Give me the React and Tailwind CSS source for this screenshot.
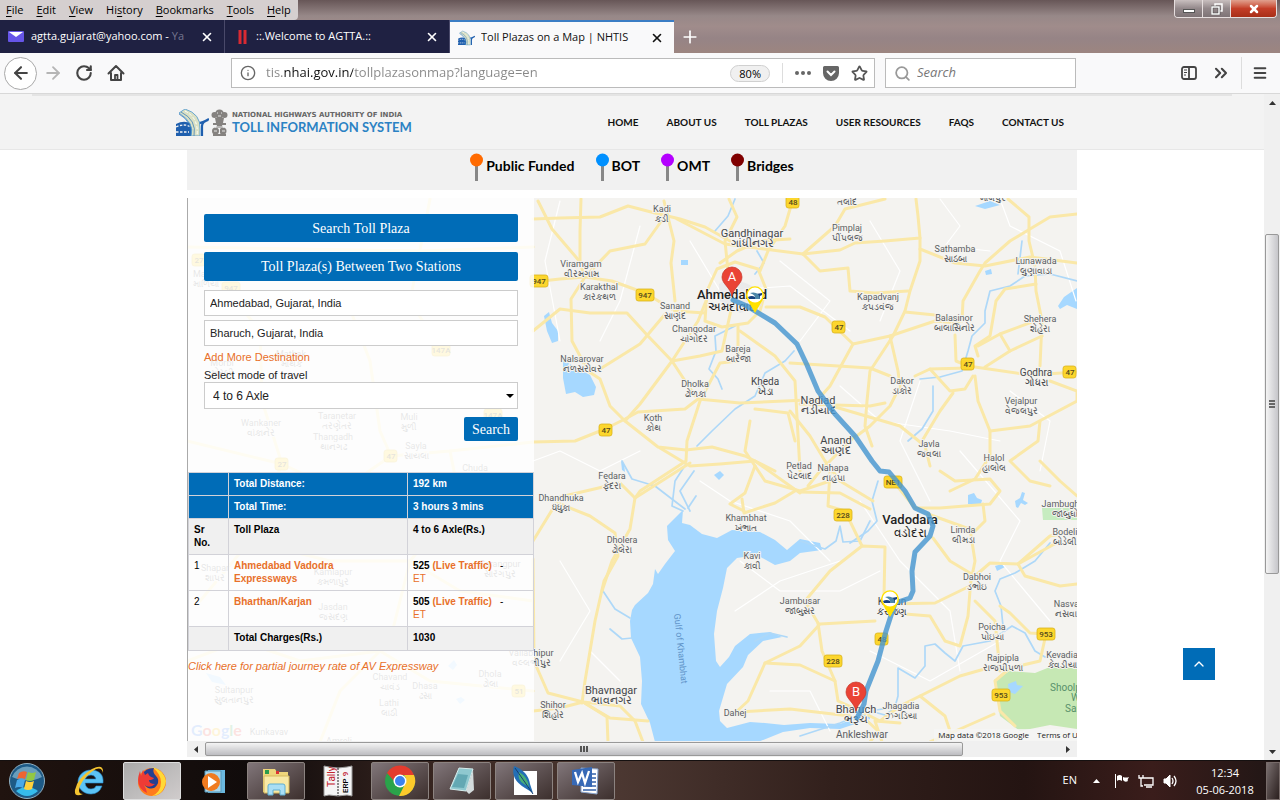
import React from 'react';
import { ArrowLeft, ArrowRight, RotateCw, Info, Star, Search, ChevronsRight, Menu, Plus, X, ChevronUp } from 'lucide-react';

const menus = ['File', 'Edit', 'View', 'History', 'Bookmarks', 'Tools', 'Help'];
const accessKeys = { File: 0, Edit: 0, View: 0, History: 2, Bookmarks: 0, Tools: 0, Help: 0 };

const navLinks = ['HOME', 'ABOUT US', 'TOLL PLAZAS', 'USER RESOURCES', 'FAQS', 'CONTACT US'];

const legend = [
  { label: 'Public Funded', color: '#ff6a00' },
  { label: 'BOT', color: '#0090ff' },
  { label: 'OMT', color: '#b400ff' },
  { label: 'Bridges', color: '#800000' },
];

// [name, local name, x, baseline, size]
const places = [
  ['Kadi', 'કડી', 662, 211, 9],
  ['Gandhinagar', 'ગાંધીનગર', 752, 236, 11],
  ['Viramgam', 'વીરમગામ', 581, 266, 9],
  ['Karakthal', 'કારકથળ', 599, 289, 9],
  ['Sanand', 'સાણંદ', 675, 308, 9],
  ['Changodar', 'ચાંગોદર', 694, 331, 9],
  ['Bareja', 'બારેજા', 738, 351, 9],
  ['Nalsarovar', 'નળસરોવર', 582, 361, 9],
  ['Dholka', 'ઢોળકા', 695, 386, 9],
  ['Kheda', 'ખેડા', 765, 384, 10],
  ['Koth', 'કોથ', 653, 420, 9],
  ['Nadiad', 'નડીયાદ', 818, 403, 11],
  ['Anand', 'આણંદ', 836, 443, 11],
  ['Petlad', 'પેટલાદ', 799, 468, 9],
  ['Nahapa', 'નાહપા', 833, 470, 9],
  ['Pimplaj', 'પીંપલજ', 847, 230, 9],
  ['Sathamba', 'સાઠંબા', 955, 251, 9],
  ['Lunawada', 'લુણાવાડા', 1036, 263, 9],
  ['Kapadvanj', 'કપડવંજ', 878, 299, 9],
  ['Balasinor', 'બાલાસિનોર', 954, 320, 9],
  ['Shehera', 'શેહેરા', 1040, 321, 9],
  ['Godhra', 'ગોધરા', 1036, 375, 10],
  ['Dakor', 'ડાકોર', 902, 383, 9],
  ['Vejalpur', 'વેજલપુર', 1021, 403, 9],
  ['Javla', 'જવલા', 929, 446, 9],
  ['Halol', 'હાલોલ', 994, 460, 9],
  ['Fedara', 'ફેદરા', 612, 478, 9],
  ['Dhandhuka', 'ધંધુકા', 561, 500, 9],
  ['Dholera', 'ઢોલેરા', 622, 542, 9],
  ['Khambhat', 'ખંભાત', 746, 520, 9],
  ['Kavi', 'કાવી', 752, 558, 9],
  ['Jambusar', 'જાંબુસર', 800, 603, 9],
  ['Bhavnagar', 'ભાવનગર', 611, 693, 11],
  ['Shihor', 'શિહોર', 553, 707, 9],
  ['Limda', 'લીમડા', 963, 532, 9],
  ['Dabhoi', 'ડભોઇ', 977, 579, 9],
  ['Poicha', 'પોઇચા', 992, 629, 9],
  ['Rajpipla', 'રાજપીપળા', 1003, 660, 9],
  ['Jhagadia', 'ઝગડિયા', 901, 708, 9],
  ['Bharuch', 'ભરૂચ', 856, 712, 11],
  ['Karjan', 'કરજણ', 892, 604, 10],
  ['Jambughoda', 'જાંબુઘોડા', 1068, 506, 9],
  ['Bodeli', 'બોડેલી', 1065, 534, 9],
  ['Nasvadi', 'નસવાડી', 1070, 606, 9],
  ['Kevadia', 'કેવડીયા', 1062, 657, 9],
  ['Vallabhipur', 'વલ્લભીપુર', 531, 655, 9],
  ['Wankaner', 'વાંકાનેર', 261, 425, 9],
  ['Taranetar', 'તરણેતર', 337, 418, 9],
  ['Muli', 'મુળી', 409, 419, 9],
  ['Thangadh', 'થાનગઢ', 333, 439, 9],
  ['Sayla', 'સાયલા', 416, 448, 9],
  ['Chuda', 'ચુડા', 475, 470, 9],
  ['Mathak', 'માથક', 291, 356, 9],
  ['Morbi', 'મોરબી', 222, 365, 9],
  ['Maliya', 'માળિયા', 206, 276, 9],
  ['Shapar', 'શાપર', 215, 570, 9],
  ['Kamlapur', 'કમળાપુર', 333, 574, 9],
  ['Jasdan', 'જસદણ', 333, 609, 9],
  ['Sarangpur', 'સારંગપુર', 500, 566, 9],
  ['Sultanpur', 'સુલતાનપુર', 234, 692, 9],
  ['Chavand', 'ચાવંડ', 390, 679, 9],
  ['Dhasa', 'ઢસા', 425, 688, 9],
  ['Lathi', 'લાઠી', 389, 705, 9],
  ['Dhola', 'ઢોલા', 490, 676, 9],
];

const shields = [
  ['48', 793, 201], ['947', 539, 280], ['947', 645, 294], ['47', 839, 326], ['47', 968, 363],
  ['47', 1070, 371], ['47', 606, 429], ['NE1', 893, 481], ['228', 843, 514], ['228', 833, 660],
  ['48', 882, 638], ['953', 1046, 633], ['953', 1001, 694],
  ['27', 199, 259], ['947', 231, 287], ['147A', 441, 349], ['147A', 493, 414], ['47', 391, 455],
  ['27', 282, 463], ['51', 519, 690],
];

const majorRoads = [
  'M533 218 L560 217 600 216 628 205 655 212 680 218 705 226 730 240',
  'M581 198 L580 230 580 262 585 276 571 298 572 340 588 370 600 378 610 405 625 420 658 446 686 449 712 446 745 455 775 470',
  'M538 200 L552 228 581 262',
  'M533 281 L560 278 585 276 612 280 645 292 675 310 705 312',
  'M585 276 L610 250 645 243 665 215',
  'M533 330 L560 308 590 312 627 312 648 335 672 360 695 395',
  'M533 441 L575 440 605 428 625 418 638 411 685 408 698 398 740 402 830 398',
  'M625 420 L640 403 672 360 698 320 706 300',
  'M600 368 L640 343 666 312',
  'M664 200 L674 240 671 262 675 300',
  'M705 320 L707 290 717 268 735 261 758 268 766 288 760 310 748 322 722 326 705 320',
  'M729 198 L737 216 725 240 728 270 733 298',
  'M793 198 L785 225 768 250 760 270',
  'M720 262 L737 250 760 240 790 238',
  'M677 218 L725 243 803 253 835 225 845 208 885 198',
  'M803 253 L840 249 855 242 885 240 920 237 918 215 916 198',
  'M803 253 L820 270 848 267 850 290 875 292 908 290',
  'M766 306 L800 306 825 316 853 343 890 335 935 320 958 322',
  'M853 343 L830 385 815 402',
  'M733 300 L722 350 700 355 672 360',
  'M738 325 L738 360 720 362 700 400 687 440 686 460 640 490 635 497',
  'M740 330 L775 355 795 380 800 470',
  'M790 362 L870 367 890 375',
  'M920 237 L920 260 910 290 905 310 893 335 870 370 867 400 865 425 872 445',
  'M890 335 L898 370 900 385 890 405 870 425 858 434',
  'M905 311 L935 314 960 320',
  'M955 334 L956 360 968 365 1030 374 1077 371',
  'M915 375 L930 368 968 367',
  'M962 320 L963 300 980 270 985 262 1010 240 1030 228 1050 216 1077 213',
  'M920 248 L955 262 985 265 1030 256 1077 262',
  'M1008 198 L1029 216 1029 240 1035 265 1036 290 1042 320 1040 365',
  'M1036 283 L1005 288 996 300 990 335 975 345 978 355',
  'M978 345 L1000 333 1040 318',
  'M1000 333 L1010 350',
  'M985 366 L1010 350 1042 335',
  'M975 375 L978 400 990 430 990 455 975 478 950 490',
  'M990 430 L1030 425 1077 400 1077 390 1050 380',
  'M1040 420 L1038 440 1010 460 1030 480 1050 485',
  'M930 368 L950 390 965 388 973 375',
  'M922 440 L940 410 953 392',
  'M825 403 L900 425 925 445 930 465',
  'M855 435 L820 470 808 485',
  'M790 410 L810 435 825 460 840 480 873 500',
  'M755 408 L788 412 795 440',
  'M750 420 L745 450 765 480 800 490 830 480',
  'M800 403 L870 405 885 402',
  'M660 447 L690 465 720 463 755 460 800 492',
  'M755 465 L745 492 730 503 744 510',
  'M742 498 L744 512 775 502 795 490',
  'M533 540 L560 496 620 482 635 497 690 462',
  'M560 503 L590 515 615 532 618 555 604 580 595 620 585 680 582 702',
  'M635 497 L630 528 612 560 602 590',
  'M533 558 L534 660 548 692 583 701 610 717 648 720',
  'M533 710 L560 707 583 701 607 716 608 741',
  'M583 701 L620 705 635 720 643 741',
  'M875 620 L820 623 800 645 765 662 748 700 735 712',
  'M765 662 L800 664 835 680 838 700 856 708',
  'M738 711 L790 708 850 715',
  'M818 622 L822 650 835 680',
  'M818 622 L805 600 830 570 862 545 885 546 884 595',
  'M862 545 L845 510 828 505 830 470',
  'M800 491 L840 492 870 508',
  'M893 480 L915 507 940 507 990 503 1000 490 990 478 955 480 940 470',
  'M928 513 L975 530 985 520 983 503',
  'M933 537 L950 560 975 575 990 562 1018 563 1050 535 1077 530',
  'M1018 563 L1025 575 1060 585 1077 583',
  'M1018 563 L1060 540',
  'M970 528 L975 560 970 585 935 602 890 603',
  'M905 613 L930 615 945 640 960 645 968 615 970 590',
  'M1000 605 L1010 612 1030 632 1046 633 1040 660 1010 667 995 680 1000 710 1015 725',
  'M995 665 L960 675 920 695 945 715 950 730',
  'M994 713 L960 728 930 741',
  'M1000 670 L995 620 975 600',
  'M856 708 L880 720 900 705 920 695',
  'M862 715 L878 730 870 741',
  'M882 741 L875 720 900 722',
  'M1040 460 L1060 480 1077 495',
  'M187 246 L300 248 420 250 533 246',
  'M187 440 L282 463 340 490 391 455 450 450 533 441',
  'M204 260 L260 330 262 400 282 463 250 540 200 600',
  'M343 290 L370 360 380 430 391 455',
  'M441 349 L410 300 430 198',
  'M187 660 L240 640 300 660 380 650 430 680 533 690',
  'M320 741 L340 690 390 640 410 560 460 500 450 450',
  'M533 600 L460 590 410 560 330 560 250 540 187 545',
];

const minorRoads = [
  'M560 200 L545 260 560 340', 'M533 460 L560 450 600 470 640 450', 'M640 225 L620 300 600 340',
  'M690 240 L720 290 790 285 850 330', 'M870 220 L900 270 880 320', 'M940 198 L960 225 945 245 990 250',
  'M840 385 L880 420 950 430 1000 440', 'M1000 198 L1010 225 1060 250 1076 300',
  'M700 480 L730 500 790 520 830 560', 'M740 560 L780 590 840 590 880 570', 'M735 610 L780 580 840 560',
  'M590 650 L620 680', 'M860 500 L900 560 950 610 960 670', 'M960 450 L1020 520 1000 560 1050 620',
  'M870 650 L930 680 1000 640', 'M770 690 L810 690 830 730', 'M560 560 L590 610 560 660',
  'M780 260 L830 300 800 340', 'M920 380 L900 440 930 500', 'M1010 390 L1050 420 1040 470',
];

const rivers = [
  'M715 230 L728 215 735 198', 'M757 250 L764 262 755 273', 'M735 325 L715 335 716 350 709 368 718 378 722 388',
  'M794 350 L785 360 765 372 755 395 735 408 712 430 697 445', 'M686 463 L675 480 672 505 683 510',
  'M622 460 L632 478 655 485 668 495 685 508', 'M690 510 L680 490 694 470', 'M696 495 L688 507',
  'M1077 280 L1050 273 1025 275 1010 285 990 290 985 310 985 322 972 335 968 350 962 370 940 376 920 378',
  'M933 385 L933 410 922 428 908 440', 'M1018 273 L1022 240', 'M878 480 L872 500 877 520 868 530 850 542',
  'M800 540 L825 548 836 540 840 525 843 541 860 540 870 520', 'M603 590 L615 608 630 617',
  'M610 628 L622 638 632 637', 'M787 636 L770 632 755 640',
  'M800 735 L840 722 870 710 895 706 898 695 898 667 915 677 925 665 925 645 935 643 945 652 955 660 963 645 990 640 1012 625 1025 632 1035 650 1045 656',
  'M1050 542 L1035 560 1015 572 1000 578 995 590 1001 605 1003 625', 'M897 706 L885 714 870 710',
];

const Places = () => (
  <g textAnchor="middle" fontFamily="Roboto, 'Noto Sans', sans-serif" fill="#5c5f63" stroke="#f4f3f0" strokeWidth="2" paintOrder="stroke">
    {places.map(([name, local, x, y, size]) => (
      <g key={name} fontSize={size} fill={size > 9 ? '#44474b' : '#5c5f63'}>
        <text x={x} y={y}>{name}</text>
        <text x={x} y={y + 10}>{local}</text>
      </g>
    ))}
    <text x="847" y="204" fontSize="9">તલોદ</text>
    <text x="993" y="200" fontSize="9">માલપુર</text>
    <text x="735" y="715" fontSize="9">Dahej</text>
    <text x="862" y="737" fontSize="10">Ankleshwar</text>
    <text x="269" y="734" fontSize="9">Kunkavav</text>
    <text x="339" y="743" fontSize="9">Amreli</text>
    <g fill="#222" fontWeight="500">
      <text x="732" y="298" fontSize="13">Ahmedabad</text>
      <text x="732" y="310" fontSize="12">અમદાવાદ</text>
      <text x="910" y="523" fontSize="13">Vadodara</text>
      <text x="910" y="536" fontSize="12">વડોદરા</text>
    </g>
  </g>
);

const Shield = ({ label, x, y }) => (
  <g>
    <rect x={x - (label.length > 2 ? 9 : 7)} y={y - 6} width={label.length > 2 ? 18 : 13} height="12" rx="2.5" fill="#fcd62d" stroke="#d9b31c" strokeWidth="0.8" />
    <text x={x} y={y + 3} fontSize="8" fontWeight="500" textAnchor="middle" fill="#54491c" fontFamily="Roboto, sans-serif">{label}</text>
  </g>
);

const RoadMark = () => (
  <>
    <path d="M0 15 Q9 10 18 16 L17 27 L0 27Z" fill="#1f5fae" />
    <path d="M0 18 Q8 14 15 18M0 23h13" fill="none" stroke="#f3f3f3" strokeWidth="1.3" strokeDasharray="2.500 1.500" />
    <path d="M20 14 Q25 15 33 10 M32 11 Q26 13 26 17 L26 27" fill="none" stroke="#1f5fae" strokeWidth="2.200" />
    <path d="M3 4 L9 0 Q25 5 24 20 L24 27 L15 27 Q19 14 3 4Z" fill="#dbe1c4" stroke="#5b9fd0" strokeWidth="0.900" />
    <path d="M3 5 Q17 13 14 27 M5 3 Q21 11 18 27" fill="none" stroke="#2d72b8" strokeWidth="0.700" />
    <path d="M9 2 Q23 9 21 27" fill="none" stroke="#fff" strokeWidth="1" strokeDasharray="3 2" />
  </>
);

const LetterPin = ({ letter, x, y }) => (
  <g transform={`translate(${x} ${y})`}>
    <path d="M0 0 C-2 -9 -10 -12 -10 -19 A10 10 0 0 1 10 -19 C10 -12 2 -9 0 0Z" fill="#ea4335" stroke="#c63327" strokeWidth="0.7" />
    <text y="-15" fontSize="13" textAnchor="middle" fill="#fff" fontFamily="Roboto, sans-serif">{letter}</text>
  </g>
);

const PlazaPin = ({ x, y }) => (
  <g transform={`translate(${x} ${y})`}>
    <path d="M0 0 L-7 -12 A9 9 0 1 1 7 -12Z" fill="#ffe100" />
    <circle cy="-18" r="7.5" fill="#fff" />
    <path d="M-7 -16 Q-3 -18 0 -16 L0 -14 L-6 -14Z M1 -19 L7 -20 L7 -18 L5 -17 L5 -14 L3 -14Z" fill="#16407f" />
    <path d="M-5 -20 Q4 -22 5 -14 L0 -14 Q1 -18 -5 -20Z" fill="#4c86a8" />
  </g>
);

const TollMap = () => (
  <svg className="absolute inset-0 h-full w-full" viewBox="187 197 890 544" preserveAspectRatio="xMinYMin slice" role="img" aria-label="Toll plazas map">
    <rect x="187" y="197" width="1600" height="1200" fill="#f4f3f0" />
    <path d="M994 679 L1010 670 1035 672 1055 664 1077 668 V728 L1050 724 1020 730 1000 715Z" fill="#c6e8b4" />
    <path d="M1042 507h35v12h-34z" fill="#c6ecc0" />
    <g fill="#a6d8ff">
      <path d="M683 509 L667 525 668 539 675 550 665 563 658 573 655 568 653 583 648 592 635 604 632 609 630 620 631 637 640 656 642 680 641 703 650 722 655 741 L758 741 783 731 810 727 840 728 870 718 870 712 840 723 810 722 784 724 765 722 750 721 727 727 720 720 719 710 727 683 743 666 748 654 763 640 782 636 770 631 750 633 735 645 729 656 720 666 716 660 714 633 717 610 723 587 727 567 737 557 757 554 775 564 790 560 800 552 822 549 820 542 800 538 787 549 775 539 760 531 732 529 717 537 702 533 690 524 682 522Z" />
      <path d="M563 359 L575 366 590 374 596 386 594 394 583 396 575 391 566 393 563 377Z" />
      <path d="M544 315 L549 311 552 322 558 330 558 340 552 342 547 330Z" />
      <path d="M681 259h7v5h-7z" />
      <path d="M975 205 L990 200 1000 204 985 208Z" />
      <path d="M1058 305 L1064 296 1077 287 V308 L1067 304 1060 308Z" />
      <path d="M985 270l6-2 1 5-6 1z" />
      <path d="M968 494l6-2 3 5 5 2-1 4h-13z" />
      <path d="M1015 500l5-3 2-6 3 1-2 7 5 3-3 2-4-2-3 5-2-1z" />
      <path d="M995 565l7-2 3 3-8 4z" />
      <path d="M1008 683l8-3 1 4 6 1-8 8-6-2z" />
      <path d="M714 474l6-4 4 4-5 5z" />
      <path d="M206 672l14 4 6 8-14-3z" />
      <path d="M448 665l6-6 3 5-4 5z" />
      <path d="M456 698l5-2 4 3-5 4z" />
      <path d="M621 460l3 3 1 8-3-2z" />
    </g>
    <g fill="none" strokeLinejoin="round" strokeLinecap="round">
      {minorRoads.map((d) => <path key={d} d={d} stroke="#fff" strokeWidth="1.2" />)}
      {rivers.map((d) => <path key={d} d={d} stroke="#aed8f8" strokeWidth="1.7" />)}
      {majorRoads.map((d) => <path key={d} d={d} stroke="#fae8a8" strokeWidth="3" />)}
    </g>
    <path d="M719 283 Q735 273 760 290 L762 305 740 312 720 300Z" fill="#e6e6e8" opacity="0.7" />
    {shields.map(([label, x, y]) => <Shield key={`${x}-${y}`} label={label} x={x} y={y} />)}
    <Places />
    <g fill="#57906a" fontSize="10" fontFamily="Roboto, sans-serif">
      <text x="1050" y="690">Shoolpaneshwar</text>
      <text x="1071" y="700">Wildlife</text>
      <text x="1065" y="711">Sanctuary</text>
    </g>
    <text transform="translate(674 613) rotate(84)" fontSize="9" fill="#5f93c8" fontFamily="Roboto, sans-serif">Gulf of Khambhat</text>
    <path
      d="M733 299 L747 305 775 322 797 343 807 364 818 390 835 413 855 435 872 460 880 470 889 471 905 490 915 507 928 513 933 525 930 535 915 551 912 570 913 590 910 597 895 602 886 630 878 660 866 690 864 703 857 717"
      fill="none" stroke="#4796cf" strokeOpacity="0.82" strokeWidth="5" strokeLinejoin="round" strokeLinecap="round"
    />
    <LetterPin letter="A" x={732} y={295} />
    <LetterPin letter="B" x={856} y={710} />
    <PlazaPin x={755} y={312} />
    <PlazaPin x={890} y={616} />
    <text x="191" y="735" fontSize="16" fontFamily="Lato, sans-serif" fontWeight="700" fill="#4285f4">
      G<tspan fill="#ea4335">o</tspan><tspan fill="#fbbc05">o</tspan>g<tspan fill="#34a853">l</tspan><tspan fill="#ea4335">e</tspan>
    </text>
  </svg>
);

const WindowButtons = () => (
  <div className="mr-[3px] flex h-[18px] w-[103px] overflow-hidden rounded-b border border-t-0 border-[#e6dede] text-white">
    <button type="button" aria-label="Minimize" className="flex w-7 items-center justify-center border-r border-[#e6dede] bg-linear-to-b from-[#c9bfbf] via-[#93888a] to-[#7e7376]">
      <span className="mt-1 h-1 w-3 border border-[#555] bg-white" />
    </button>
    <button type="button" aria-label="Restore" className="flex w-7 items-center justify-center border-r border-[#e6dede] bg-linear-to-b from-[#c9bfbf] via-[#93888a] to-[#7e7376]">
      <svg viewBox="0 0 12 12" className="h-3 w-3" fill="none" stroke="#fff" strokeWidth="1.5"><path d="M4 3V1h7v7H9" /><path d="M1 4h7v7H1z" stroke="#444" strokeWidth="2.6" /><path d="M1 4h7v7H1z" /></svg>
    </button>
    <button type="button" aria-label="Close window" className="flex flex-1 items-center justify-center bg-linear-to-b from-[#e0a08e] via-[#c43e28] to-[#a82f18]">
      <X className="h-3 w-3" strokeWidth={5} />
    </button>
  </div>
);

const TitleBar = () => (
  <div className="flex h-5 items-start justify-between">
    <div className="flex h-5 w-[298px] items-center gap-[13px] rounded-br bg-[#d5cfcf] pl-1.5 text-[11px] text-black">
      {menus.map((name) => {
        const at = accessKeys[name];
        return (
          <button type="button" key={name} className="leading-5">
            {name.slice(0, at)}<u className="underline-offset-2">{name[at]}</u>{name.slice(at + 1)}
          </button>
        );
      })}
    </div>
    <WindowButtons />
  </div>
);

const Tab = ({ icon, title, active, faded }) => (
  <div className={active
    ? 'flex w-[224px] items-center border-t-2 border-[#3b7dc4] bg-[#f9f9fa] pr-2.5 pl-2 text-[#111]'
    : 'flex w-[225px] items-center border-r border-[#4a4a6a] bg-[#1f2142] pr-2.5 pl-2 text-white'}>
    <span className="flex h-5 w-[23px] shrink-0 items-center">{icon}</span>
    <span className="flex-1 overflow-hidden text-[11px] whitespace-nowrap">
      {title}{faded && <span className="text-[#75768f]">{faded}</span>}
    </span>
    <button type="button" aria-label={`Close ${title}`} className="ml-1.5"><X className="h-3.5 w-3.5" strokeWidth={2.8} /></button>
  </div>
);

const Tabs = () => (
  <div className="flex h-[33px]">
    <Tab title="agtta.gujarat@yahoo.com - " faded="Ya" icon={(
      <svg viewBox="0 0 16 12" className="h-3 w-4"><rect width="16" height="11" rx="1" fill="#6655e8" /><path d="M1 1h14L8 6z" fill="#fff" /></svg>
    )} />
    <Tab title="::.Welcome to AGTTA.::" icon={(
      <svg viewBox="0 0 16 16" className="ml-0.5 h-4 w-4"><path d="M5 1v14M10 1v14" stroke="#d92a32" strokeWidth="3" /></svg>
    )} />
    <Tab active title="Toll Plazas on a Map | NHTIS" icon={<svg viewBox="0 0 33 27" className="h-4 w-[17px]"><RoadMark /></svg>} />
    <button type="button" aria-label="New tab" className="ml-1.5 text-white"><Plus className="h-5 w-5" strokeWidth={2} /></button>
  </div>
);

const Toolbar = () => (
  <div className="flex h-[41px] items-center border-b border-[#d8d8d8] bg-[#f9f9fa] pr-3 pl-1 text-[#444]">
    <button type="button" aria-label="Back" className="flex h-[33px] w-[33px] items-center justify-center rounded-full border border-[#a9a9a9] bg-white">
      <ArrowLeft className="h-5 w-5" strokeWidth={2.5} />
    </button>
    <button type="button" aria-label="Forward" className="ml-1.5 text-[#b5b5b5]"><ArrowRight className="h-5 w-5" strokeWidth={2.2} /></button>
    <button type="button" aria-label="Reload" className="ml-3"><RotateCw className="h-[18px] w-[18px]" strokeWidth={2.8} /></button>
    <button type="button" aria-label="Home" className="ml-3.5">
      <svg viewBox="0 0 18 18" className="h-[18px] w-[18px]" fill="none" stroke="currentColor" strokeWidth="2" strokeLinejoin="round" strokeLinecap="round">
        <path d="M1.5 9.5 9 2l7.500 7.500M4 9v7h10V9" /><path d="M8 16v-5h2.500v5" strokeWidth="1.800" />
      </svg>
    </button>
    <div className="ml-[106px] flex h-[30px] w-[644px] items-center border border-[#bbb] bg-white pr-1.5 pl-2">
      <Info className="h-4 w-4 text-[#666]" />
      <input
        aria-label="Address"
        defaultValue="tis.nhai.gov.in/tollplazasonmap?language=en"
        className="ml-2.5 min-w-0 flex-1 bg-[linear-gradient(90deg,#888_18px,#111_18px,#111_87px,#888_87px)] bg-clip-text text-[13px] text-transparent outline-none"
      />
      <span className="rounded-full border border-[#d0d0d0] bg-[#f0f0f0] px-2 text-[11px] leading-[15px] text-black">80%</span>
      <span className="ml-3 h-5 w-px bg-[#ddd]" />
      <button type="button" aria-label="Page actions" className="ml-3">
        <svg viewBox="0 0 16 4" className="h-1 w-4" fill="#666"><circle cx="2" cy="2" r="2" /><circle cx="8" cy="2" r="2" /><circle cx="14" cy="2" r="2" /></svg>
      </button>
      <button type="button" aria-label="Save to Pocket" className="ml-3">
        <svg viewBox="0 0 16 15" className="h-[15px] w-4"><path d="M1.500 0h13A1.500 1.500 0 0 1 16 1.500V7a8 8 0 0 1-16 0V1.500A1.500 1.500 0 0 1 1.500 0z" fill="#666" /><path d="M4.500 5.500 8 9l3.500-3.500" fill="none" stroke="#fff" strokeWidth="2" strokeLinecap="round" /></svg>
      </button>
      <button type="button" aria-label="Bookmark" className="ml-3"><Star className="h-[17px] w-[17px] text-[#555]" strokeWidth={2.5} /></button>
    </div>
    <label className="ml-2.5 flex h-[30px] w-[191px] items-center border border-[#bbb] bg-white pl-2">
      <Search className="h-[17px] w-[17px] text-[#999]" strokeWidth={2.5} />
      <input aria-label="Search the web" placeholder="Search" className="ml-1.5 min-w-0 flex-1 text-[13px] italic outline-none placeholder:text-[#777]" />
    </label>
    <div className="ml-auto flex items-center">
      <button type="button" aria-label="Sidebar">
        <svg viewBox="0 0 16 14" className="h-3.5 w-4" fill="none" stroke="currentColor" strokeWidth="1.800"><rect x="1" y="1" width="14" height="12" rx="2" /><path d="M8 1v12" /><path d="M3 4h3M3 6.500h3M3 9h2" strokeWidth="1" /></svg>
      </button>
      <button type="button" aria-label="More tools" className="ml-3.5"><ChevronsRight className="h-5 w-5" strokeWidth={2.5} /></button>
      <span className="ml-2.5 h-8 w-px bg-[#ddd]" />
      <button type="button" aria-label="Menu" className="ml-2.5"><Menu className="h-4 w-4" strokeWidth={3} /></button>
    </div>
  </div>
);

const Emblem = () => (
  <svg viewBox="0 0 17 27" className="h-[27px] w-[17px]" fill="#85827f">
    <circle cx="8.500" cy="5" r="4.500" /><circle cx="3.500" cy="6" r="3" /><circle cx="13.500" cy="6" r="3" />
    <path d="M4 9h9l-1 5H5zM2 14h13v2H2zM6 16h5l1 3H5z" /><circle cx="4.500" cy="22" r="3.500" /><circle cx="12" cy="22" r="3.500" /><path d="M2 25h13v2H2z" />
    <path d="M6 4h1M10 4h1M7 7h3M4 18h9M3 22h3M11 22h3M8.500 19v6" stroke="#f3f3f3" strokeWidth="0.900" />
  </svg>
);

const SiteHeader = () => (
  <header className="border-b border-[#e7e7e7] bg-[#f3f3f3]">
    <div className="mx-8 h-0.5 bg-[#e4e4e4]" />
    <div className="mx-auto flex h-[53px] max-w-[912px] items-center justify-between pr-6 font-[Lato,sans-serif]">
      <a href="#home" className="flex items-center">
        <svg viewBox="0 0 33 27" className="h-[27px] w-[33px]"><RoadMark /></svg>
        <span className="ml-0.5"><Emblem /></span>
        <span className="ml-1 block">
          <span className="block font-['DejaVu_Sans',sans-serif] text-[7px] leading-[9px] font-bold text-[#666]">NATIONAL HIGHWAYS AUTHORITY OF INDIA</span>
          <span className="block text-[13px] leading-[14px] font-bold text-[#2b82c4]">TOLL INFORMATION SYSTEM</span>
        </span>
      </a>
      <nav className="flex gap-7 text-[10px] font-bold text-[#111]">
        {navLinks.map((link) => <a key={link} href={`#${link.toLowerCase().replace(' ', '-')}`}>{link}</a>)}
      </nav>
    </div>
  </header>
);

const Legend = () => (
  <div className="flex h-10 justify-center gap-[21px] bg-[#f1f1f1] pt-[3px] font-[Lato,sans-serif] text-[14px] leading-[26px] font-bold text-black">
    {legend.map(({ label, color }) => (
      <span key={label} className="flex h-7 items-start gap-[3px]">
        <svg viewBox="0 0 13 28" className="h-7 w-[13px]"><path d="M6.500 8v20" stroke="#878787" strokeWidth="3" /><circle cx="6.500" cy="7" r="6.500" fill={color} /></svg>
        {label}
      </span>
    ))}
  </div>
);

const cell = 'border border-[#d2d2d8] px-[5px] align-top';

const ResultTable = () => (
  <table className="w-full border-collapse text-left text-[10px] leading-[13px] text-black">
    <thead className="bg-[#006cb7] text-white">
      <tr className="h-[23px]"><th className={`${cell} w-10`} /><th className={`${cell} w-[179px] pt-1`}>Total Distance:</th><th className={`${cell} pt-1`}>192 km</th></tr>
      <tr className="h-[23px]"><th className={cell} /><th className={`${cell} pt-1`}>Total Time:</th><th className={`${cell} pt-1`}>3 hours 3 mins</th></tr>
    </thead>
    <tbody>
      <tr className="h-9 bg-[#f0f0f0]"><th className={`${cell} pt-1`}>Sr No.</th><th className={`${cell} pt-1`}>Toll Plaza</th><th className={`${cell} pt-1`}>4 to 6 Axle(Rs.)</th></tr>
      {[['1', 'Ahmedabad Vadodra Expressways', '525'], ['2', 'Bharthan/Karjan', '505']].map(([no, name, fee]) => (
        <tr key={no} className="h-9">
          <td className={`${cell} pt-1`}>{no}</td>
          <td className={`${cell} pt-1 font-bold text-[#e8702a]`}><a href="#plaza" className="block max-w-[120px]">{name}</a></td>
          <td className={`${cell} pt-1`}>
            <b>{fee}</b> <a href="#traffic" className="font-bold text-[#e8702a]">(Live Traffic)</a>
            <span className="ml-2">-</span><br /><a href="#et" className="text-[#e8702a]">ET</a>
          </td>
        </tr>
      ))}
      <tr className="h-6 bg-[#f0f0f0]"><th className={cell} /><th className={`${cell} pt-1`}>Total Charges(Rs.)</th><th className={`${cell} pt-1`}>1030</th></tr>
    </tbody>
  </table>
);

const SearchPanel = () => (
  <div className="relative h-full w-[347px] border-l border-[#aaa] bg-white/85 font-['Liberation_Sans',sans-serif]">
    <div className="px-4 pt-4">
      <button type="button" className="block h-7 w-full rounded-xs bg-[#006cb7] font-['Liberation_Serif',serif] text-[14px] text-white">Search Toll Plaza</button>
      <button type="button" className="mt-2.5 block h-[29px] w-full rounded-xs bg-[#006cb7] font-['Liberation_Serif',serif] text-[14px] text-white">Toll Plaza(s) Between Two Stations</button>
      <input aria-label="From" defaultValue="Ahmedabad, Gujarat, India" className="mt-[9px] block h-[26px] w-full border border-[#ccc] bg-white px-[5px] text-[11px] text-[#222]" />
      <input aria-label="To" defaultValue="Bharuch, Gujarat, India" className="mt-1 block h-[26px] w-full border border-[#ccc] bg-white px-[5px] text-[11px] text-[#222]" />
      <a href="#add" className="mt-1 block text-[11px] leading-[14px] text-[#e8702a]">Add More Destination</a>
      <label htmlFor="mode" className="mt-1 block text-[11px] leading-[14px] text-[#222]">Select mode of travel</label>
      <div className="relative">
        <select id="mode" className="block h-[27px] w-full appearance-none border border-[#ccc] bg-white px-2 text-[12px] text-[#222]">
          <option>4 to 6 Axle</option>
        </select>
        <svg viewBox="0 0 8 4" className="pointer-events-none absolute top-3 right-1 h-1 w-2"><path d="M0 0h8L4 4z" /></svg>
      </div>
      <button type="button" className="mt-2 ml-auto block h-6 w-[54px] rounded-xs bg-[#006cb7] font-['Liberation_Serif',serif] text-[14px] text-white">Search</button>
    </div>
    <div className="mt-[31px]"><ResultTable /></div>
    <a href="#partial" className="mt-2 block text-[11px] leading-[14px] text-[#e8702a] italic">Click here for partial journey rate of AV Expressway</a>
  </div>
);

const HorizontalScrollbar = () => (
  <div className="flex h-4 items-center bg-[#f0f0f0]">
    <span className="w-[18px] text-center"><svg viewBox="0 0 4 7" className="mx-auto h-[7px] w-1"><path d="M4 0v7L0 3.500z" fill="#333" /></svg></span>
    <span className="flex h-3.5 flex-[757] items-center justify-center gap-px rounded-xs border border-[#999] bg-linear-to-b from-[#f4f4f4] to-[#bdbdc1]">
      <i className="h-1.5 w-0.5 bg-[#555]" /><i className="h-1.5 w-0.5 bg-[#555]" /><i className="h-1.5 w-0.5 bg-[#555]" />
    </span>
    <span className="flex-[96]" />
    <span className="w-[18px]"><svg viewBox="0 0 4 7" className="mx-auto h-[7px] w-1"><path d="M0 0v7l4-3.500z" fill="#333" /></svg></span>
  </div>
);

const VerticalScrollbar = () => (
  <div className="flex w-4 flex-col items-center bg-[#f0f0f0]">
    <span className="flex h-[17px] items-center"><svg viewBox="0 0 7 4" className="h-1 w-[7px]"><path d="M0 4h7L3.500 0z" fill="#333" /></svg></span>
    <span className="flex-[123]" />
    <span className="flex w-3.5 flex-[339] flex-col items-center justify-center gap-px rounded-xs border border-[#999] bg-linear-to-r from-[#f4f4f4] to-[#c6c6ca]">
      <i className="h-0.5 w-1.5 bg-[#666]" /><i className="h-0.5 w-1.5 bg-[#666]" /><i className="h-0.5 w-1.5 bg-[#666]" />
    </span>
    <span className="flex-[170]" />
    <span className="flex h-[17px] items-center"><svg viewBox="0 0 7 4" className="h-1 w-[7px]"><path d="M0 0h7L3.500 4z" fill="#333" /></svg></span>
  </div>
);

const icons = {
  'Internet Explorer': (
    <>
      <path d="M29 18H11q1 6 6 6 4 0 5-3h6q-3 8-11 8C9 29 4 23 4 17S9 5 17 5s13 5 12 13zM11 14h11q-1-4-5-4t-6 4z" fill="#5cc3f5" stroke="#278bd0" strokeWidth="0.600" />
      <path d="M29 8Q30 -2 18 4 4 12 1 25q-1 8 8 4Q3 29 6 21 11 10 22 4q6-2 7 4z" fill="#f4c430" />
    </>
  ),
  Firefox: (
    <>
      <circle cx="16" cy="17" r="14" fill="#ff7b1c" />
      <path d="M16 2q12 3 14 14-2 14-14 15 9-4 9-14 0-8-9-15z" fill="#ffd936" />
      <path d="M6 10q3-7 12-7-2 4 2 8t1 9q-3 5-9 3-7-4-6-13z" fill="#253f91" />
      <path d="M4 6q-6 16 7 22-1-5-3-8 6 4 11-1-6 0-6-4 4 0 5-2-5-1-6-5l-3 2-2-5-2 6z" fill="#ee3b35" />
    </>
  ),
  'Media Player': (
    <>
      <path d="M10 5h17v23H10z" fill="#6bb8df" /><path d="M7 6h16v21H7z" fill="#a9d8ee" stroke="#5797b9" />
      <circle cx="13" cy="17" r="9" fill="#f07b20" /><path d="M10 11l9 6-9 6z" fill="#fff" />
    </>
  ),
  Explorer: (
    <>
      <path d="M3 4h12l2 3h11v20H3z" fill="#eed57b" /><path d="M5 5h4v4H5z" fill="#2a9b4c" /><path d="M16 6h3v3h-3z" fill="#d33" />
      <path d="M4 11h25v17H4z" fill="#f8e9a6" stroke="#d5b95e" /><path d="M8 30v-9q0-2 2-2h13q2 0 2 2v9h-5v-5h-7v5z" fill="#a9def5" stroke="#5faed2" />
    </>
  ),
  Tally: (
    <>
      <path d="M2 1l5 1 9 1 9-1 5-1v30l-5-1-9 1-9-1-5 1z" fill="#f5f5f5" stroke="#999" />
      <path d="M16 3v28" stroke="#222" strokeDasharray="2 1" />
      <text transform="translate(13 22) rotate(-90)" fontSize="10" fill="#c2202c" fontFamily="Roboto">Tally</text>
      <text transform="translate(26 28) rotate(-90)" fontSize="8" fill="#000" fontFamily="Roboto" fontWeight="500">ERP <tspan fill="#c2202c">9</tspan></text>
    </>
  ),
  Chrome: (
    <>
      <circle cx="16" cy="16" r="15" fill="#2aa34a" /><path d="M3 8A15 15 0 0 1 30 10H16q-5 0-6 6z" fill="#e33b2e" />
      <path d="M30 10A15 15 0 0 1 15 31l6-12q3-4-1-9z" fill="#fcca2b" /><circle cx="16" cy="16" r="6.500" fill="#fff" /><circle cx="16" cy="16" r="5" fill="#3d82ee" />
    </>
  ),
  Notes: (
    <>
      <path d="M13 3l14 1-7 22-16-2z" fill="#8fc8cf" stroke="#d7eeee" /><path d="M27 5l1 20-5 4-3-3z" fill="#d4dcdd" /><path d="M12 9l10 1-4 13-12-1z" fill="#63a8b3" />
    </>
  ),
  Feather: (
    <>
      <path d="M6 6h23v24H6z" fill="#fff" /><path d="M6 1q14 5 16 18l3 9-8-5Q2 14 6 1z" fill="#246fb5" /><path d="M11 7q9 5 10 15l-5-3Q9 15 11 7z" fill="#49b078" /><path d="M7 3q7 10 18 26" fill="none" stroke="#163e71" />
    </>
  ),
  Word: (
    <>
      <path d="M11 3l17 1-1 25-16-2z" fill="#fff" stroke="#8ba6cf" /><path d="M22 9h4M22 13h4M22 17h4M13 21h13M13 25h13" stroke="#3462a9" strokeWidth="1.500" />
      <path d="M2 5l20-3v20L2 20z" fill="#3769b6" /><path d="M5 7l3 10 4-9 3 10 4-12" fill="none" stroke="#fff" strokeWidth="2.300" />
    </>
  ),
};

const openApps = ['Explorer', 'Chrome', 'Notes', 'Feather', 'Word'];

const taskButton = (name) => {
  if (name === 'Firefox') return 'border-[#ddd] bg-linear-to-br from-[#aaa] to-[#d0cccc]';
  if (openApps.includes(name)) return 'border-[#8c8380] bg-linear-to-br from-[#81767a] to-[#3d302e]';
  return 'border-transparent';
};

const Taskbar = () => (
  <footer className="flex h-10 items-center border-t border-[#151010] bg-[linear-gradient(90deg,#20130f,#100b0b_20%,#3a2722_35%,#4c3832_48%,#32201c_65%,#241412_80%,#3a1d1b_90%,#201615)] text-white">
    <button type="button" aria-label="Start" className="flex h-full w-[61px] items-center pl-2">
      <svg viewBox="0 0 38 38" className="h-[38px] w-[38px]">
        <circle cx="19" cy="19" r="17.500" fill="#1d5a86" stroke="#91afc0" /><path d="M4 15a16 16 0 0 1 30 0q-14 7-30 0z" fill="#8ab9d2" opacity="0.700" /><path d="M8 29q11-8 22 0-11 10-22 0z" fill="#36bcec" />
        <path d="M11 11q4-3 8-1l-2 7q-4-2-8 0z" fill="#ee6532" /><path d="M20 10q4 2 8 0l-2 8q-4 2-8 0z" fill="#93c743" />
        <path d="M9 18q4-2 8 0l-2 8q-4-2-8 0z" fill="#49a9e9" /><path d="M18 19q4 2 8 0l-2 8q-4 2-8 0z" fill="#ffd13c" />
      </svg>
    </button>
    <div className="flex gap-1">
      {Object.entries(icons).map(([name, art]) => (
        <button type="button" key={name} aria-label={name} className={`flex h-[38px] w-[58px] items-center justify-center rounded-xs border ${taskButton(name)}`}>
          <svg viewBox="0 0 32 32" className="h-8 w-8">{art}</svg>
        </button>
      ))}
    </div>
    <div className="ml-auto flex items-center text-[11px]">
      <span>EN</span>
      <svg viewBox="0 0 7 4" className="ml-4 h-1 w-[7px]"><path d="M0 4h7L3.500 0z" fill="#fff" /></svg>
      <svg viewBox="0 0 16 16" className="ml-3.5 h-4 w-4" fill="#fff"><path d="M1 1h1v14H1zM3 3q3-2 5 0v5Q5 6 3 8zM9 4q3 1 6 0-2 3-1 4-3 2-5-1z" /></svg>
      <svg viewBox="0 0 16 16" className="ml-2 h-4 w-4" fill="none" stroke="#fff" strokeWidth="1.300"><path d="M5 5h10v7H6M8 14h6M1 2v3h4V2M3 5v8h2" /></svg>
      <svg viewBox="0 0 16 16" className="ml-2 h-4 w-4" fill="none" stroke="#fff"><path d="M2 6v4h2l4 4V2L4 6z" fill="#fff" /><path d="M10 5q2 3 0 6M12 3q4 5 0 10" strokeWidth="1.300" /></svg>
      <div className="ml-4 w-[62px] text-center leading-[17px] whitespace-nowrap"><div>12:34</div><div>05-06-2018</div></div>
      <button type="button" aria-label="Show desktop" className="ml-2.5 h-[38px] w-3.5 border border-[#776b69] bg-linear-to-br from-[#7a7070] to-[#2b201f]" />
    </div>
  </footer>
);

const App = () => (
  <div className="flex h-screen min-h-[800px] flex-col bg-white font-['Open_Sans','Noto_Sans',sans-serif]">
    <div className="bg-[linear-gradient(180deg,#675657,#978888_30%,#a08c8b_50%,#968486_72%,#9c8580)]">
      <TitleBar />
      <Tabs />
    </div>
    <Toolbar />
    <div className="relative flex min-h-0 flex-1">
      <main className="flex min-w-0 flex-1 flex-col">
        <SiteHeader />
        <div className="mx-auto flex min-h-0 w-full max-w-[890px] flex-1 flex-col pb-[3px]">
          <Legend />
          <div className="relative mt-2 min-h-0 flex-1 overflow-hidden">
            <TollMap />
            <SearchPanel />
            <div className="absolute right-0 bottom-0 flex h-3 gap-2 overflow-hidden bg-[#f5f5f5]/80 pl-1 text-[8px] leading-3 whitespace-nowrap text-[#222]">
              <span>Map data ©2018 Google</span>
              <a href="#terms" className="w-10 overflow-hidden">Terms of Use</a>
            </div>
          </div>
          <HorizontalScrollbar />
        </div>
      </main>
      <VerticalScrollbar />
      <button type="button" aria-label="Back to top" className="absolute right-[65px] bottom-20 flex h-8 w-8 items-center justify-center bg-[#006cb7] text-white">
        <ChevronUp className="h-4 w-4" />
      </button>
    </div>
    <Taskbar />
  </div>
);

export default App;
